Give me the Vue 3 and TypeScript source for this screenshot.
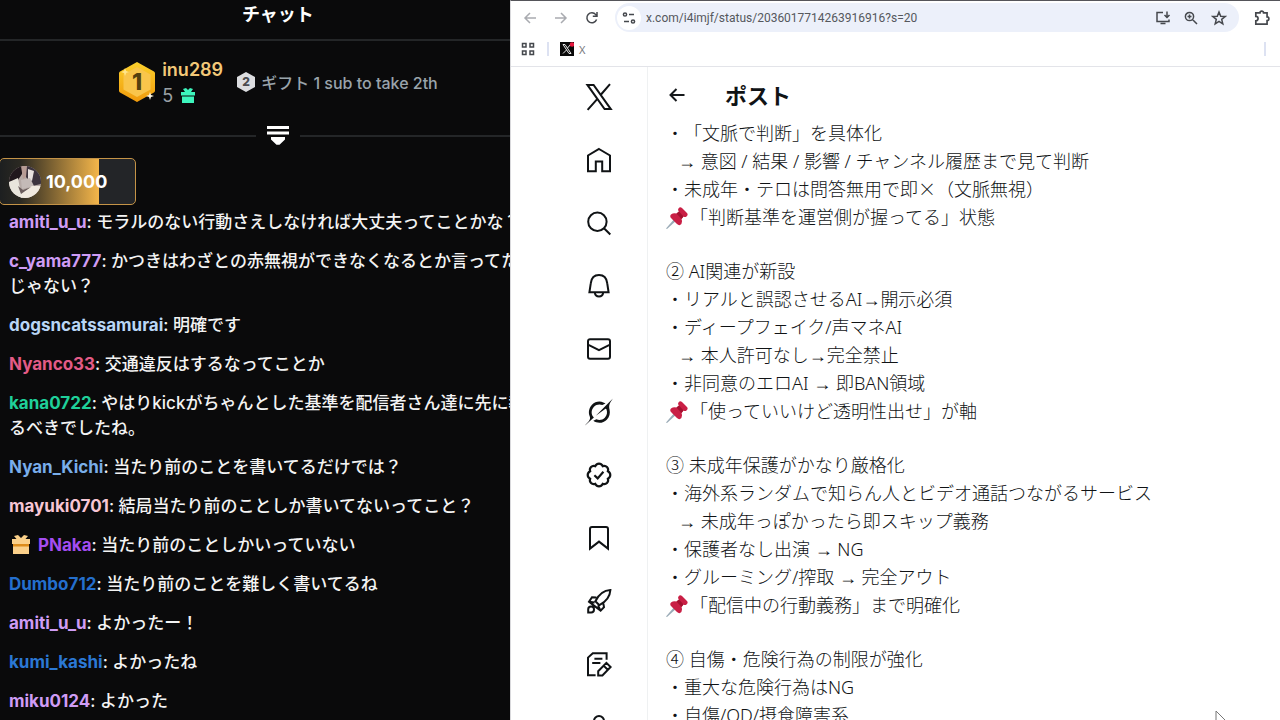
<script setup lang="ts">
interface ChatMessage {
  user: string
  color: string
  text: string
  gifter?: boolean
}

interface IconShape {
  d: string
  solid?: boolean
}

interface NavItem {
  label: string
  box: string
  shapes: IconShape[]
}

interface PostLine {
  kind: 'plain' | 'pinned-line' | 'indented'
  text: string
}

const messages: ChatMessage[] = [
  { user: 'amiti_u_u', color: '#cf9cf5', text: 'モラルのない行動さえしなければ大丈夫ってことかな？' },
  { user: 'c_yama777', color: '#cf9cf5', text: 'かつきはわざとの赤無視ができなくなるとか言ってた\nじゃない？' },
  { user: 'dogsncatssamurai', color: '#b9d6f6', text: '明確です' },
  { user: 'Nyanco33', color: '#e35b87', text: '交通違反はするなってことか' },
  { user: 'kana0722', color: '#1fd09a', text: 'やはりkickがちゃんとした基準を配信者さん達に先に教\nるべきでしたね。' },
  { user: 'Nyan_Kichi', color: '#79aeea', text: '当たり前のことを書いてるだけでは？' },
  { user: 'mayuki0701', color: '#f7c6d4', text: '結局当たり前のことしか書いてないってこと？' },
  { user: 'PNaka', color: '#a44df2', text: '当たり前のことしかいっていない', gifter: true },
  { user: 'Dumbo712', color: '#246fcd', text: '当たり前のことを難しく書いてるね' },
  { user: 'amiti_u_u', color: '#cf9cf5', text: 'よかったー！' },
  { user: 'kumi_kashi', color: '#2b78d4', text: 'よかったね' },
  { user: 'miku0124', color: '#cf9cf5', text: 'よかった' },
]

const navItems: NavItem[] = [
  {
    label: 'X',
    box: '0 0 28 28',
    shapes: [{ d: 'M2.4 1.9H8.6L25.8 26.1H19.6ZM25 1.2L15.6 12M12.6 15.6L2.6 26.8' }],
  },
  { label: 'ホーム', box: '0 0 28 28', shapes: [{ d: 'M14 3L25 9.5V25.2H17.2V15.6H10.8V25.2H3V9.5Z' }] },
  { label: '検索', box: '0 0 28 28', shapes: [{ d: 'M21.6 12.7A9.2 9.2 0 1 1 3.2 12.7A9.2 9.2 0 1 1 21.6 12.7ZM19 19.2L25.3 25.5' }] },
  {
    label: '通知',
    box: '0 0 28 28',
    shapes: [{ d: 'M4.4 20.3L5.8 11.2C6.4 6 9.6 3 14 3S21.6 6 22.2 11.2L23.6 20.3ZM9.8 20.6C10.1 23 11.8 24.4 14 24.4S17.9 23 18.2 20.6' }],
  },
  {
    label: 'メッセージ',
    box: '0 0 28 28',
    shapes: [{ d: 'M5 4.2H23A2 2 0 0 1 25 6.2V21.8A2 2 0 0 1 23 23.8H5A2 2 0 0 1 3 21.8V6.2A2 2 0 0 1 5 4.2ZM3 9.7L14 15.2L25 9.7' }],
  },
  {
    label: 'Grok',
    box: '0 0 33 32',
    shapes: [
      {
        solid: true,
        d: 'M12.745 20.54l10.97-8.19c.539-.4 1.307-.244 1.564.38 1.349 3.288.746 7.241-1.938 9.955-2.683 2.714-6.417 3.31-9.83 1.954l-3.728 1.745c5.347 3.697 11.84 2.782 15.898-1.324 3.219-3.255 4.216-7.692 3.284-11.693l.008.009c-1.351-5.878.332-8.227 3.782-13.031L33 0l-4.54 4.59v-.014L12.743 20.544m-2.263 1.987c-3.837-3.707-3.175-9.446.1-12.755 2.42-2.449 6.388-3.448 9.852-1.979l3.72-1.737c-.67-.49-1.53-1.017-2.515-1.387-4.455-1.854-9.789-.931-13.41 2.728-3.483 3.523-4.579 8.94-2.697 13.561 1.405 3.454-.899 5.898-3.22 8.364C1.49 30.2.666 31.074 0 32l10.478-9.466',
      },
    ],
  },
  {
    label: '認証',
    box: '-0.7 -0.7 25.4 25.4',
    shapes: [
      {
        d: 'M22.25 12c0-1.43-.88-2.67-2.19-3.34.46-1.39.2-2.9-.81-3.91s-2.52-1.27-3.91-.81c-.66-1.31-1.91-2.19-3.34-2.19s-2.67.88-3.33 2.19c-1.4-.46-2.91-.2-3.92.81s-1.26 2.52-.8 3.91c-1.31.67-2.2 1.91-2.2 3.34s.89 2.67 2.2 3.34c-.46 1.39-.21 2.9.8 3.91s2.52 1.26 3.91.81c.67 1.31 1.91 2.19 3.34 2.19s2.68-.88 3.34-2.19c1.39.45 2.9.2 3.91-.81s1.27-2.52.81-3.91c1.31-.67 2.19-1.91 2.19-3.34zM7.8 12.2L10.8 15.1L16 9',
      },
    ],
  },
  { label: 'ブックマーク', box: '0 0 28 28', shapes: [{ d: 'M7 3H21A2 2 0 0 1 23 5V24.6L14 17.6L5 24.6V5A2 2 0 0 1 7 3Z' }] },
  {
    label: 'プレミアム',
    box: '0 0 28 28',
    shapes: [
      { d: 'M10.4 14.2C13.6 7.6 18.6 3.4 25.4 3C25 9.8 20.8 14.8 14.4 18.2ZM11.4 10.6L7 10.2L4 14.8L15.6 23.6L19 20.2L18.2 15.8M4 14.8L9.6 15.4M15.6 23.6L13 18.4M3.2 25.4V22.4A2.9 2.9 0 1 1 6 25.4Z' },
    ],
  },
  {
    label: '記事',
    box: '0 0 28 28',
    shapes: [
      { d: 'M10.6 25.2H3V7.6L7.8 3.2H21.6V9.8M9.4 8.8H17.4M7.2 13H15.4M13.2 25.4V21.2L21.4 12.8L25.6 17L17.4 25.4ZM18.6 15.6L22.8 19.8' },
    ],
  },
  { label: 'プロフィール', box: '0 0 28 28', shapes: [{ d: 'M19 8A5 5 0 1 1 9 8A5 5 0 1 1 19 8ZM4 25C5 14 23 14 24 25Z' }] },
]

const plain = (text: string): PostLine => ({ kind: 'plain', text })
const pin = (text: string): PostLine => ({ kind: 'pinned-line', text })
const indent = (text: string): PostLine => ({ kind: 'indented', text })

const sections: PostLine[][] = [
  [
    plain('・「文脈で判断」を具体化'),
    indent('→ 意図 / 結果 / 影響 / チャンネル履歴まで見て判断'),
    plain('・未成年・テロは問答無用で即×（文脈無視）'),
    pin('「判断基準を運営側が握ってる」状態'),
  ],
  [
    plain('② AI関連が新設'),
    plain('・リアルと誤認させるAI→開示必須'),
    plain('・ディープフェイク/声マネAI'),
    indent('→ 本人許可なし→完全禁止'),
    plain('・非同意のエロAI → 即BAN領域'),
    pin('「使っていいけど透明性出せ」が軸'),
  ],
  [
    plain('③ 未成年保護がかなり厳格化'),
    plain('・海外系ランダムで知らん人とビデオ通話つながるサービス'),
    indent('→ 未成年っぽかったら即スキップ義務'),
    plain('・保護者なし出演 → NG'),
    plain('・グルーミング/搾取 → 完全アウト'),
    pin('「配信中の行動義務」まで明確化'),
  ],
  [plain('④ 自傷・危険行為の制限が強化'), plain('・重大な危険行為はNG'), plain('・自傷/OD/摂食障害系')],
]

/* Arrows and crosses are set in their own families. */
const pieces = (line: string): string[] => line.split(/([→×])/).filter((s) => s.length > 0)
const pieceClass = (s: string): string => (s === '→' ? 'arrow' : s === '×' ? 'cross' : '')
</script>

<template>
  <div class="screen">
    <aside class="chat">
      <div class="chat-inner">
        <h2 class="chat-title">チャット</h2>

        <div class="leaders">
          <svg class="medal" viewBox="0 0 38 42" aria-hidden="true">
            <defs>
              <linearGradient id="gold" x1="0" y1="0" x2="0" y2="1">
                <stop offset="0" stop-color="#fbd02c" />
                <stop offset="1" stop-color="#f09a0c" />
              </linearGradient>
            </defs>
            <path d="M19 1L36 10.5Q37 11 37 12.500V29.500Q37 31 36 31.500L19 41L2 31.500Q1 31 1 29.500V12.500Q1 11 2 10.500Z" fill="url(#gold)" />
            <path d="M19 6L32.500 13.500V28.500L19 36L5.500 28.500V13.500Z" fill="#f9c54b" />
            <path d="M7 7L8.200 10L11 11L8.200 12L7 15L6 12L3 11L6 10Z" fill="#ffe58a" />
            <path d="M32 31L33 34L36 35L33 36L32 39L31 36L28 35L31 34Z" fill="#fff6df" />
            <text x="19" y="29" text-anchor="middle" class="medal-num">1</text>
          </svg>
          <div class="first">
            <span class="first-name">inu289</span>
            <span class="first-count">
              5
              <svg viewBox="0 0 16 16" class="gift-small" aria-hidden="true">
                <path d="M1 4H5L3 1L6 0L8 2L10 0L13 1L11 4H15V7.500H1ZM2 8.500H14V15H2Z" fill="#3df5bd" />
              </svg>
            </span>
          </div>
          <div class="second">
            <svg class="medal-small" viewBox="0 0 20 22" aria-hidden="true">
              <path d="M10 1L19 6V16L10 21L1 16V6Z" fill="#dcdde0" />
              <text x="10" y="15" text-anchor="middle" class="medal-small-num">2</text>
            </svg>
            <span>ギフト 1 sub to take 2th</span>
          </div>
        </div>

        <div class="divider">
          <button type="button" class="expand" aria-label="展開">
            <svg viewBox="0 0 22 20" aria-hidden="true">
              <path d="M0 0H22V3H0ZM0 5.500H22V8.500H0ZM4 11H18V13.500L12.500 18.800H9.500L4 13.500Z" fill="#fff" />
            </svg>
          </button>
        </div>

        <div class="pinned">
          <svg class="avatar" viewBox="0 0 32 32" aria-hidden="true">
            <clipPath id="round"><circle cx="16" cy="16" r="16" /></clipPath>
            <g clip-path="url(#round)">
              <path d="M0 0H32V32H0Z" fill="#b6aaa6" />
              <path d="M0 0H13V8L9 14L0 16Z" fill="#20171c" />
              <path d="M12 0H18V10L14 13Z" fill="#b79b94" />
              <path d="M18 0H32V18L23 20L17 11Z" fill="#3c333d" />
              <path d="M19 3L25 5L23 15L19 13Z" fill="#e8e1df" />
              <path d="M0 16L9 12L11 23L13 32H0Z" fill="#e9e5dc" />
              <path d="M12 14L21 12L25 20L13 23Z" fill="#c4bab7" />
              <path d="M12 26L23 20L32 20V32H12Z" fill="#f0e9df" />
              <path d="M9 20L14 24L22 21L12 28Z" fill="#6b5d5d" />
            </g>
          </svg>
          <span>10,000</span>
        </div>

        <ul class="messages">
          <li v-for="(m, i) in messages" :key="i">
            <svg v-if="m.gifter" class="gift" viewBox="0 0 18 19" aria-hidden="true">
              <path d="M0 4H4.500L2 1L6 0L9 3L12 0L16 1L13.500 4H18V9H0ZM1 9H17V19H1Z" fill="#fbd08a" />
              <path d="M1 9H17V11.500H1Z" fill="#dd8c1c" />
            </svg><b :style="{ color: m.color }">{{ m.user }}</b>: {{ m.text }}
          </li>
        </ul>
      </div>
    </aside>

    <section class="browser">
      <header class="toolbar">
        <button type="button" class="tool faded" aria-label="戻る">
          <svg viewBox="0 0 16 16"><path d="M14 8H3M8 3L3 8L8 13" /></svg>
        </button>
        <button type="button" class="tool faded" aria-label="進む">
          <svg viewBox="0 0 16 16"><path d="M2 8H13M8 3L13 8L8 13" /></svg>
        </button>
        <button type="button" class="tool" aria-label="再読み込み">
          <svg viewBox="0 0 16 16"><path d="M12.600 9.500A5 5 0 1 1 11.800 4.600L13 6M13 2V6.200H8.800" /></svg>
        </button>
        <div class="omnibox">
          <button type="button" class="site-info" aria-label="サイト情報">
            <svg viewBox="0 0 16 16"><path d="M5.600 4.500A1.600 1.600 0 1 1 2.400 4.500A1.600 1.600 0 1 1 5.600 4.500ZM8 4.500H13M13.600 11.500A1.600 1.600 0 1 1 10.400 11.500A1.600 1.600 0 1 1 13.600 11.500ZM3 11.500H8" /></svg>
          </button>
          <input type="text" aria-label="アドレス" value="x.com/i4imjf/status/2036017714263916916?s=20" />
          <button type="button" class="tool" aria-label="インストール">
            <svg viewBox="0 0 16 16"><path d="M8 2.500H2V11.500H14V9.500M5.500 13.500H10.500M12 1.500V7.500M9.500 5L12 7.500L14.500 5" /></svg>
          </button>
          <button type="button" class="tool" aria-label="ズーム">
            <svg viewBox="0 0 16 16"><path d="M10.600 6.500A4.100 4.100 0 1 1 2.400 6.500A4.100 4.100 0 1 1 10.600 6.500ZM9.500 9.500L14 14M4.500 6.500H8.500M6.500 4.500V8.500" /></svg>
          </button>
          <button type="button" class="tool" aria-label="ブックマークに追加">
            <svg viewBox="0 0 16 16"><path d="M8 2L9.700 6.200L14.200 6.500L10.700 9.400L11.800 13.800L8 11.400L4.200 13.800L5.300 9.400L1.800 6.500L6.300 6.200Z" /></svg>
          </button>
        </div>
        <button type="button" class="tool extension" aria-label="拡張機能">
          <svg viewBox="0 0 16 16"><path d="M2.500 3.500H6.200A1.600 1.600 0 0 1 9.400 3.500H12.500V7A1.600 1.600 0 0 1 12.500 10.200V13.500H2.500V10.500A2 2 0 0 0 2.500 6.500Z" /></svg>
        </button>
      </header>

      <div class="bookmarks">
        <button type="button" class="tool" aria-label="アプリ">
          <svg viewBox="0 0 16 16"><path d="M2.500 2.500H6V6H2.500ZM10 2.500H13.500V6H10ZM2.500 10H6V13.500H2.500ZM10 10H13.500V13.500H10Z" /></svg>
        </button>
        <i class="bar"></i>
        <a href="#" class="bookmark">
          <svg viewBox="0 0 14 14" aria-hidden="true">
            <path d="M0 0H14V14H0Z" fill="#0a0a0a" />
            <path d="M3 2.500H5L11 11.500H9ZM10.500 2.500L7.500 6M6.500 8L3 11.500" fill="none" stroke="#e8e8e8" />
            <circle cx="12" cy="2.500" r="2.300" fill="#e8173e" />
          </svg>
          X
        </a>
        <i class="bar end"></i>
      </div>

      <div class="page">
        <nav class="side">
          <a v-for="item in navItems" :key="item.label" href="#" :aria-label="item.label">
            <svg :viewBox="item.box" aria-hidden="true">
              <path v-for="(s, i) in item.shapes" :key="i" :d="s.d" :class="s.solid ? 'solid' : 'line'" />
            </svg>
          </a>
        </nav>

        <main class="post">
          <div class="post-head">
            <button type="button" class="back" aria-label="戻る">
              <svg viewBox="0 0 18 18"><path d="M16.500 9H2.500M8.500 3L2.500 9L8.500 15" /></svg>
            </button>
            <h1>ポスト</h1>
          </div>
          <div class="post-body">
            <div v-for="(section, si) in sections" :key="si" class="section">
              <p v-for="(line, li) in section" :key="li" :class="line.kind">
                <svg v-if="line.kind === 'pinned-line'" class="pin-icon" viewBox="0 0 22 22" aria-hidden="true">
                  <path d="M9.500 10.500L11.500 12.500L1 22L0 21.500Z" fill="#9aabb7" />
                  <path d="M12.500 1.500Q14 -0.500 16 1L21 6Q22.500 8 20.500 9.500Q19 10.500 17.500 9.500L15.500 12Q17 16 14 18Q12.500 18.500 11 17L5 11Q3.500 9 5 7.500Q7.500 5.500 10.500 6.500L13 4.500Q11.500 3 12.500 1.500Z" fill="#c91f45" />
                  <path d="M13 4.500L17.500 9.500L15.500 12L10.500 6.500Z" fill="#a3112f" />
                </svg><span v-for="(s, pi) in pieces(line.text)" :key="pi" :class="pieceClass(s)">{{ s }}</span>
              </p>
            </div>
          </div>
        </main>
      </div>
    </section>

    <svg class="cursor" viewBox="0 0 12 18" aria-hidden="true">
      <path d="M1 1V16L5 12.500L11 11Z" fill="#fff" stroke="#777" />
    </svg>
  </div>
</template>

<style>
body {
  margin: 0;
  overflow: hidden;
}
</style>

<style scoped>
.screen {
  position: relative;
  display: grid;
  grid-template-columns: 51fr 77fr;
  height: 100vh;
  overflow: hidden;
  background: #fff;
}
button {
  padding: 0;
  border: 0;
  background: none;
}
svg {
  display: block;
}

.chat {
  min-width: 0;
  overflow: hidden;
  background: #0a0a0b;
  color: #f3f3f3;
  font-family: Inter, "Noto Sans CJK JP", sans-serif;
}
.chat-inner {
  width: 109%;
}
.chat-title {
  box-sizing: border-box;
  height: 41px;
  margin: 0;
  padding-top: 2px;
  border-bottom: 2px solid #242628;
  font-size: 18px;
  line-height: 26px;
  font-weight: 700;
  text-align: center;
  color: #fff;
}
.leaders {
  display: flex;
  align-items: center;
  justify-content: center;
  height: 82px;
}
.medal {
  width: 38px;
  height: 42px;
}
.medal-num {
  font-size: 23px;
  font-weight: 800;
  fill: #55400f;
}
.first {
  display: flex;
  flex-direction: column;
  margin: 2px 13px 0 6px;
}
.first-name {
  font-size: 18px;
  line-height: 26px;
  font-weight: 600;
  color: #f2c878;
}
.first-count {
  display: flex;
  align-items: center;
  gap: 7px;
  font-size: 18px;
  line-height: 26px;
  color: #9aa0a5;
}
.gift-small {
  width: 16px;
  height: 16px;
}
.second {
  display: flex;
  align-items: center;
  gap: 5px;
  font-size: 16px;
  font-weight: 500;
  color: #9aa4ab;
}
.medal-small {
  width: 20px;
  height: 22px;
}
.medal-small-num {
  font-size: 12px;
  font-weight: 800;
  fill: #4a4b4f;
}
.divider {
  display: flex;
  align-items: center;
  height: 26px;
}
.divider::before,
.divider::after {
  content: "";
  flex: 1;
  height: 2px;
  background: #242628;
}
.expand {
  width: 44px;
}
.expand svg {
  width: 22px;
  height: 20px;
  margin: 0 auto;
}
.pinned {
  box-sizing: border-box;
  display: flex;
  align-items: center;
  gap: 5px;
  width: 137px;
  height: 47px;
  margin: 9px 0 0 -1px;
  padding-left: 9px;
  border: 1px solid #c49347;
  border-radius: 5px;
  background: linear-gradient(90deg, #1d1f20 0, #2b2922 15%, #f3b54a 73%, #232528 73%);
  font-size: 18px;
  font-weight: 700;
  color: #fff;
}
.avatar {
  width: 32px;
  height: 32px;
}
.messages {
  display: grid;
  gap: 14px;
  margin: 5px 0 0;
  padding: 0 0 0 9px;
  list-style: none;
  font-size: 17px;
  line-height: 25px;
  font-weight: 500;
}
.messages li {
  white-space: pre-line;
}
.messages b {
  font-weight: 700;
}
.gift {
  display: inline-block;
  width: 18px;
  height: 19px;
  margin: 0 8px 0 3px;
  vertical-align: -3px;
}

.browser {
  display: flex;
  flex-direction: column;
  min-width: 0;
  min-height: 0;
  overflow: hidden;
  border-top: 1px solid #55555a;
  border-left: 1px solid #d9d9dc;
  font-family: "Noto Sans", "Noto Sans CJK JP", sans-serif;
}
.toolbar {
  display: flex;
  align-items: center;
  gap: 15px;
  padding: 2px 9px 1px 11px;
}
.tool svg {
  width: 16px;
  height: 16px;
  fill: none;
  stroke: #45484d;
  stroke-width: 1.5;
}
.faded svg {
  stroke: #a9abb0;
}
.omnibox {
  flex: 1;
  display: flex;
  align-items: center;
  gap: 12px;
  height: 29px;
  padding: 0 12px 0 2px;
  border-radius: 15px;
  background: #ecf0fa;
}
.site-info {
  width: 24px;
  height: 24px;
  border-radius: 50%;
  background: #fff;
}
.site-info svg {
  width: 16px;
  height: 16px;
  margin: 0 auto;
  fill: none;
  stroke: #45484d;
  stroke-width: 1.5;
}
.omnibox input {
  flex: 1;
  min-width: 0;
  margin-left: -7px;
  padding: 0;
  border: 0;
  background: none;
  font: 12px Roboto, "Noto Sans", sans-serif;
  color: #55585d;
}
.extension {
  margin-left: -1px;
}
.extension svg {
  width: 18px;
  height: 18px;
}
.bookmarks {
  display: flex;
  align-items: center;
  height: 32px;
  padding: 0 14px 1px 9px;
  border-bottom: 1px solid #e3e4e9;
}
.bar {
  width: 2px;
  height: 14px;
  margin: 0 11px;
  background: #dde2f2;
}
.bar.end {
  margin: 0 0 0 auto;
}
.bookmark {
  display: flex;
  align-items: center;
  gap: 5px;
  font-size: 11px;
  color: #77797d;
  text-decoration: none;
}
.bookmark svg {
  width: 14px;
  height: 14px;
}

.page {
  flex: 1;
  min-height: 0;
  display: flex;
}
.side {
  flex: none;
  display: flex;
  flex-direction: column;
  align-items: flex-end;
  gap: 35px;
  box-sizing: border-box;
  width: 137px;
  padding: 16px 34px 0 0;
  border-right: 1px solid #eff1f2;
}
.side a {
  display: block;
}
.side svg {
  width: 28px;
  height: 28px;
}
.side .line {
  fill: none;
  stroke: #101315;
  stroke-width: 2;
}
.side .solid {
  fill: #101315;
}
.post {
  flex: 1;
  min-width: 0;
  padding-left: 18px;
  color: #101315;
}
.post-head {
  box-sizing: border-box;
  display: flex;
  align-items: center;
  gap: 39px;
  height: 52px;
  padding-top: 3px;
}
.post-head h1 {
  margin: 0;
  font-size: 22px;
  line-height: 28px;
  font-weight: 700;
}
.back svg {
  width: 18px;
  height: 18px;
  margin-left: 2px;
  fill: none;
  stroke: #16191c;
  stroke-width: 2;
}
.section {
  margin-bottom: 26px;
}
.section p {
  height: 28px;
  margin: 0;
  font-size: 18px;
  line-height: 28px;
  font-weight: 300;
  white-space: nowrap;
  text-spacing-trim: space-all;
  font-feature-settings: "chws" 0;
}
.section .indented {
  padding-left: 12px;
}
.arrow {
  font-family: "Liberation Sans", sans-serif;
  line-height: 1;
}
.cross {
  font-family: "Noto Sans CJK JP", sans-serif;
  line-height: 1;
}
.pin-icon {
  display: inline-block;
  width: 22px;
  height: 22px;
  margin-right: 2px;
  vertical-align: -5px;
}
.cursor {
  position: absolute;
  right: 53px;
  bottom: -8px;
  width: 12px;
  height: 18px;
}
</style>
